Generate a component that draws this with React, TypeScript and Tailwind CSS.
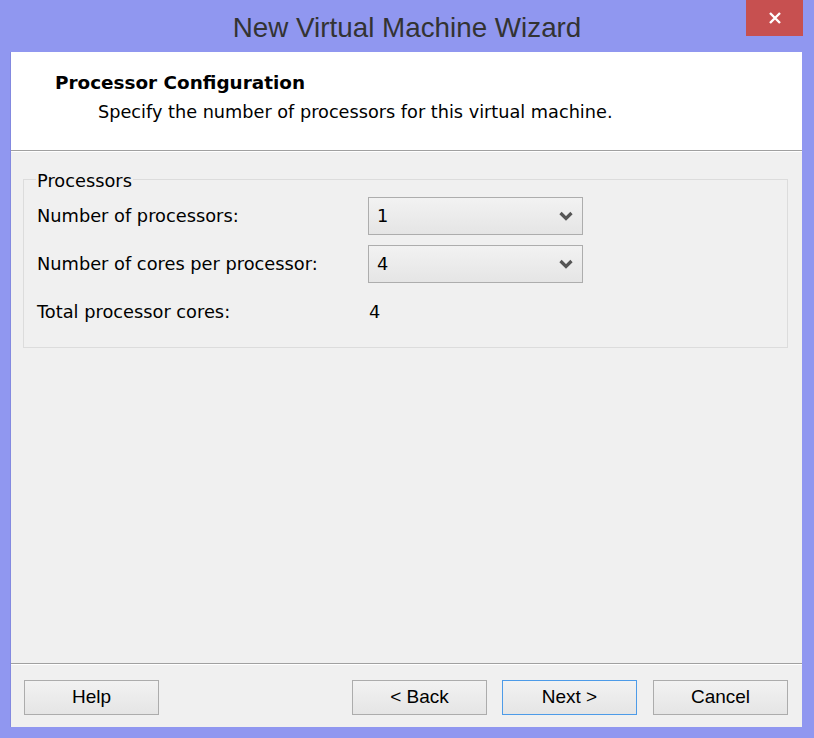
import React from 'react';

const font = { fontFamily: '"DejaVu Sans", "Liberation Sans", sans-serif' };

const Chevron: React.FC = () => (
  <svg width="14" height="10" viewBox="0 0 14 10" className="shrink-0">
    <path d="M1.5 2 L7 7.5 L12.5 2" fill="none" stroke="#555" strokeWidth="3.2" />
  </svg>
);

const Combo: React.FC<{ value: string }> = ({ value }) => (
  <div className="w-[215px] h-[38px] border border-[#adadad] bg-gradient-to-b from-[#f2f2f2] to-[#e5e5e5] flex items-center justify-between pl-[8px] pr-[9px] text-[17.8px] text-black">
    <span>{value}</span>
    <Chevron />
  </div>
);

const WizButton: React.FC<{ label: string; focused?: boolean }> = ({ label, focused }) => (
  <button
    className={
      'w-[135px] h-[35px] border bg-gradient-to-b from-[#f2f2f2] to-[#e5e5e5] text-[19px] text-black ' +
      (focused ? 'border-[#4d9be8]' : 'border-[#acacac]')
    }
    style={{ fontFamily: '"Liberation Sans", sans-serif' }}
  >
    {label}
  </button>
);

export default function App() {
  return (
    <div className="w-[814px] h-[738px] bg-[#9097f0] flex flex-col" style={font}>
      {/* title bar */}
      <div className="h-[52px] relative flex items-center justify-center shrink-0">
        <span className="text-[27.8px] text-[#333] mt-[4px]" style={{ fontFamily: '"Liberation Sans", sans-serif' }}>
          New Virtual Machine Wizard
        </span>
        <div className="absolute top-0 right-[11px] w-[57px] h-[36px] bg-[#c75050] flex items-center justify-center">
          <svg width="14" height="14" viewBox="0 0 14 14">
            <path d="M2 2 L12 12 M12 2 L2 12" stroke="#fff" strokeWidth="2.4" />
          </svg>
        </div>
      </div>

      {/* client area */}
      <div className="ml-[10px] mr-[12px] h-[675px] flex flex-col bg-[#f0f0f0] border-l border-[#8389e0]">
        <div className="h-[99px] bg-white border-b border-[#a0a0a0] pt-[17px] shrink-0">
          <div className="pl-[44px] font-bold text-[18.4px] text-black">Processor Configuration</div>
          <div className="pl-[87px] mt-[2px] text-[17.7px] text-black">
            Specify the number of processors for this virtual machine.
          </div>
        </div>
        <div className="flex-1 border-t border-white pt-[27px] pl-[12px] pr-[14px]">
          <div className="relative border border-[#dcdcdc] pt-[17px] pb-[16px] pl-[13px]">
            <span className="absolute -top-[12px] left-[12px] px-[1px] bg-[#f0f0f0] text-[17.8px] text-black">
              Processors
            </span>
            <div className="grid grid-cols-[331px_auto] gap-y-[10px] items-center text-[17.8px] text-black">
              <div>Number of processors:</div>
              <Combo value="1" />
              <div>Number of cores per processor:</div>
              <Combo value="4" />
              <div className="h-[38px] flex items-center">Total processor cores:</div>
              <div className="pl-[1px]">4</div>
            </div>
          </div>
        </div>
        <div className="h-[64px] border-t border-[#a0a0a0] shrink-0">
          <div className="border-t border-white h-full flex items-start pt-[15px] pl-[13px] pr-[14px]">
            <WizButton label="Help" />
            <div className="flex-1" />
            <div className="flex gap-[15px]">
              <WizButton label="< Back" />
              <WizButton label="Next >" focused />
              <div className="pl-[1px]">
                <WizButton label="Cancel" />
              </div>
            </div>
          </div>
        </div>
      </div>
    </div>
  );
}
